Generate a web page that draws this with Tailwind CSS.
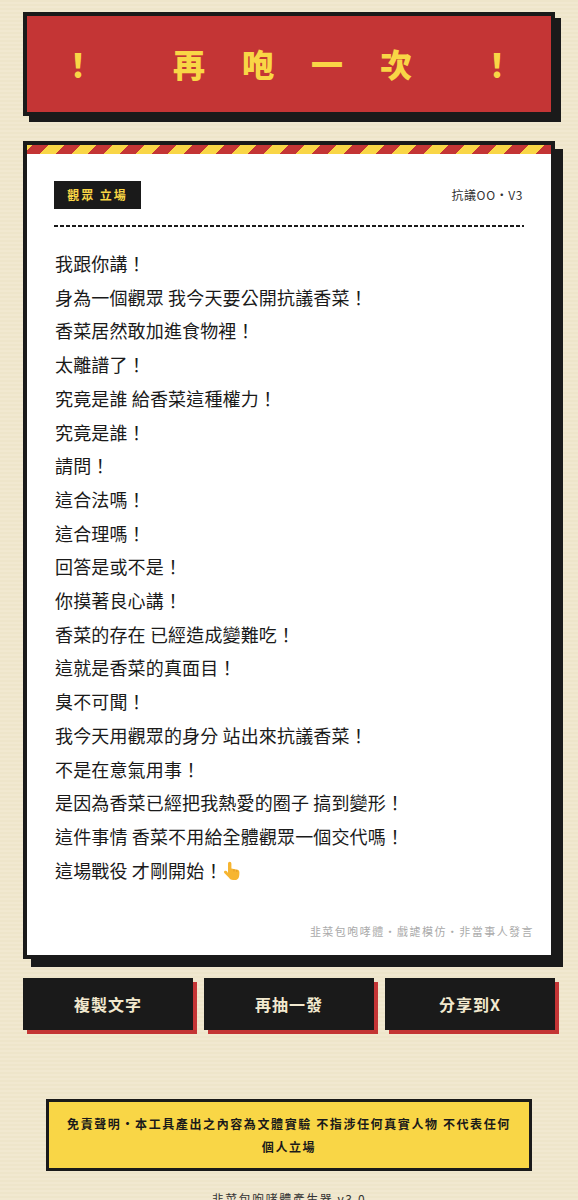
<!DOCTYPE html>
<html lang="zh-Hant">
<head>
<meta charset="UTF-8">
<meta name="viewport" content="width=device-width, initial-scale=1.0">
<title>韭菜包咆哮體產生器</title>
<script src="https://cdn.jsdelivr.net/npm/@tailwindcss/browser@4"></script>
</head>
<body class="h-[1200px] overflow-hidden bg-[#f0e7cd] bg-[repeating-linear-gradient(0deg,#f1e8d0_0px,#f1e8d0_2px,#eee5ca_2px,#eee5ca_4px)] font-['Noto_Sans_CJK_TC','Noto_Sans_CJK_SC',sans-serif] text-[#1a1a1a]">
  <div class="px-[23px] pt-[12px]">

    <!-- 標題 -->
    <div class="flex h-[104px] items-center border-4 border-[#1a1a1a] bg-[#c43535] pb-[3px] pl-[35px] text-[32px] leading-none font-black whitespace-nowrap text-[#f9d646] shadow-[6px_6px_0_#1a1a1a]">
      <span>！</span>
      <h1 class="ml-[79px] tracking-[37px]">再咆一次</h1>
      <span class="ml-[32px]">！</span>
    </div>

    <!-- 主卡片 -->
    <div class="mt-[25px] h-[818px] border-4 border-[#1a1a1a] bg-white shadow-[8px_8px_0_#1a1a1a]">
      <div class="h-[9px] bg-[repeating-linear-gradient(-45deg,#c43535_0px,#c43535_11.3px,#f9d646_11.3px,#f9d646_22.6px)]"></div>
      <div class="px-[27px] pt-[27px]">
        <div class="flex items-center justify-between pb-[16px]">
          <span class="flex h-[28px] w-[87px] items-center justify-center bg-[#1a1a1a] text-[12px] font-bold tracking-[2px] text-[#f9d646]">觀眾 立場</span>
          <span class="pr-[1px] text-[12px] tracking-[0.6px] text-[#333]">抗議OO・V3</span>
        </div>
        <div class="h-[2px] bg-[repeating-linear-gradient(90deg,#1a1a1a_0px,#1a1a1a_4px,transparent_4px,transparent_6px)]"></div>
        <div class="mt-[20px] pl-[1px] text-[18px] leading-[33.7px] tracking-[0.15px] whitespace-nowrap">
          <p>我跟你講！</p>
          <p>身為一個觀眾 我今天要公開抗議香菜！</p>
          <p>香菜居然敢加進食物裡！</p>
          <p>太離譜了！</p>
          <p>究竟是誰 給香菜這種權力！</p>
          <p>究竟是誰！</p>
          <p>請問！</p>
          <p>這合法嗎！</p>
          <p>這合理嗎！</p>
          <p>回答是或不是！</p>
          <p>你摸著良心講！</p>
          <p>香菜的存在 已經造成變難吃！</p>
          <p>這就是香菜的真面目！</p>
          <p>臭不可聞！</p>
          <p>我今天用觀眾的身分 站出來抗議香菜！</p>
          <p>不是在意氣用事！</p>
          <p>是因為香菜已經把我熱愛的圈子 搞到變形！</p>
          <p>這件事情 香菜不用給全體觀眾一個交代嗎！</p>
          <p class="flex items-center">這場戰役 才剛開始！<svg class="h-[20px] w-[20px]" viewBox="0 0 20 20"><path d="M5 2.5a1.7 1.7 0 0 1 3.4 0V7.5l6 1.3c1.4.3 2 1.2 2 2.6 0 2.5-.3 4.8-1.2 6.1-.6.9-1.6 1.5-3 1.5H10c-1.8 0-3-.7-4-2.2L1.3 12c-.7-1-.1-2 .8-2.2.8-.2 1.5.1 2 .7L5 12Z" fill="#f6b531"/><path d="M11 8.2v2.2M13.8 8.8v2" stroke="#d98f20" stroke-width=".7" fill="none"/></svg></p>
        </div>
        <p class="mt-[35px] mr-[-10px] text-right text-[11px] leading-[18px] tracking-[1.45px] whitespace-nowrap text-[#aaa]">韭菜包咆哮體・戲謔模仿・非當事人發言</p>
      </div>
    </div>

    <!-- 按鈕 -->
    <div class="mt-[19px] grid grid-cols-3 gap-[11px]">
      <button class="h-[52px] bg-[#1a1a1a] text-[16px] font-bold tracking-[1px] text-[#f2e9cf] shadow-[4px_4px_0_#c43535]">複製文字</button>
      <button class="h-[52px] bg-[#1a1a1a] text-[16px] font-bold tracking-[1px] text-[#f2e9cf] shadow-[4px_4px_0_#c43535]">再抽一發</button>
      <button class="h-[52px] bg-[#1a1a1a] text-[16px] font-bold tracking-[1px] text-[#f2e9cf] shadow-[4px_4px_0_#c43535]">分享到X</button>
    </div>

    <!-- 免責聲明 -->
    <div class="mx-[23px] mt-[69px] flex h-[72px] items-center justify-center border-[3px] border-[#1a1a1a] bg-[#f9d646] px-[16px] text-center text-[12px] leading-[23px] font-bold tracking-[1.6px]">
      <p>免責聲明・本工具產出之內容為文體實驗 不指涉任何真實人物 不代表任何個人立場</p>
    </div>

    <p class="mt-[19px] text-center text-[12px] leading-[18px] tracking-[1.5px] text-[#333]">韭菜包咆哮體產生器 v3.0</p>
  </div>
</body>
</html>
